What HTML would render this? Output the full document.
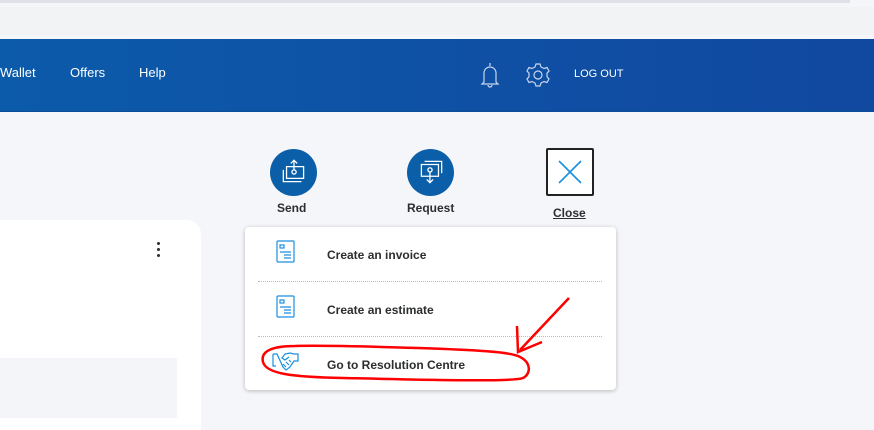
<!DOCTYPE html><html><head><style>
body{margin:0;width:874px;height:416px;overflow:hidden;background:#f5f6fa;font-family:"Liberation Sans",sans-serif;position:relative}
.a{position:absolute}
.t{font-weight:bold;font-size:12px;color:#2c2e2f}
</style></head><body>
<div class="a" style="left:0;top:0;width:850px;height:3px;background:#dfe1e6"></div>
<div class="a" style="left:0;top:7px;width:874px;height:28px;background:#f2f3f5"></div>
<div class="a" style="left:0;top:39px;width:874px;height:72px;background:linear-gradient(90deg,#0c5aaa,#1148a0)"></div>
<div class="a" style="left:0;top:111px;width:874px;height:1px;background:#0a4e9c"></div>
<div class="a" style="left:0;top:65px;color:#fff;font-size:13px">Wallet</div>
<div class="a" style="left:70px;top:65px;color:#fff;font-size:13px">Offers</div>
<div class="a" style="left:139px;top:65px;color:#fff;font-size:13px">Help</div>
<svg class="a" style="left:478px;top:61px" width="24" height="28" viewBox="0 0 24 28" fill="none" stroke="#c9d6ee" stroke-width="1.2"><path d="M12 2v3M6 21V12a6 6 0 0 1 12 0v9l2 2H4z M10 24a2 2 0 0 0 4 0"/></svg>
<svg class="a" style="left:524px;top:61px" width="28" height="28" viewBox="0 0 28 28" fill="none" stroke="#c9d6ee" stroke-width="1.2"><path d="M12 3h4l1 3 3 1.5 3-1 2 3.5-2 2.2v3.6l2 2.2-2 3.5-3-1L17 22l-1 3h-4l-1-3-3-1.5-3 1-2-3.5 2-2.2v-3.6l-2-2.2 2-3.5 3 1L11 6z"/><circle cx="14" cy="14" r="4"/></svg>
<div class="a" style="left:574px;top:68px;color:#fff;font-size:11px">LOG OUT</div>
<div class="a" style="left:-20px;top:220px;width:221px;height:210px;background:#fff;border-radius:0 14px 0 0"></div>
<div class="a" style="left:0;top:358px;width:177px;height:60px;background:#f4f5f8"></div>
<div class="a" style="left:157px;top:242px;width:3px;height:3px;background:#2c2e2f;box-shadow:0 6px #2c2e2f,0 12px #2c2e2f;border-radius:50%"></div>
<div class="a" style="left:270px;top:149px;width:47px;height:47px;border-radius:50%;background:#0b5fa8"></div>
<svg class="a" style="left:278px;top:156px" width="32" height="32" viewBox="0 0 30 30" fill="none" stroke="#fff" stroke-width="1.2"><path d="M8 10h16v11H8zM5 13v11h17M15 13a2 2 0 1 0 0.1 0M15 13V4M12 7l3-3 3 3"/></svg>
<div class="a t" style="left:277px;top:201px">Send</div>
<div class="a" style="left:407px;top:149px;width:47px;height:47px;border-radius:50%;background:#0b5fa8"></div>
<svg class="a" style="left:415px;top:156px" width="32" height="32" viewBox="0 0 30 30" fill="none" stroke="#fff" stroke-width="1.2"><path d="M9 5h16v11M6 8h16v11H6zM14 11a2 2 0 1 0 0.1 0M14 15v10M11 22l3 3 3-3"/></svg>
<div class="a t" style="left:407px;top:201px">Request</div>
<div class="a" style="left:546px;top:148px;width:44px;height:44px;border:2px solid #222;border-radius:2px;background:#fff"></div>
<svg class="a" style="left:558px;top:160px" width="24" height="24" stroke="#1a8fe0" stroke-width="1.6"><path d="M1 1l22 22M23 1L1 23"/></svg>
<div class="a t" style="left:553px;top:206px;text-decoration:underline">Close</div>
<div class="a" style="left:245px;top:227px;width:371px;height:163px;background:#fff;border-radius:4px;box-shadow:0 1px 4px rgba(0,0,0,.25)"></div>
<div class="a" style="left:258px;top:281px;width:344px;border-top:1px dotted #bbb"></div>
<div class="a" style="left:258px;top:336px;width:344px;border-top:1px dotted #bbb"></div>
<svg class="a" style="left:276px;top:240px" width="20" height="24" fill="none" stroke="#1a8fe0" stroke-width="1.2"><rect x="1" y="1" width="17" height="21" rx="1"/><rect x="4" y="5" width="4" height="3"/><path d="M4 12h11M8 15h7M8 18h7"/></svg>
<svg class="a" style="left:276px;top:295px" width="20" height="24" fill="none" stroke="#1a8fe0" stroke-width="1.2"><rect x="1" y="1" width="17" height="21" rx="1"/><rect x="4" y="5" width="4" height="3"/><path d="M4 12h11M8 15h7M8 18h7"/></svg>
<svg class="a" style="left:271px;top:351px" width="28" height="22" fill="none" stroke="#1a8fe0" stroke-width="1.2"><path d="M2 3h4l6 13 3 3 4-3 4-6h4V3h-4l-4-1-5 1-3 4 3 2 4-3M2 3v12h3M15 16l-3-3M18 14l-3-3M20 11l-2-2"/></svg>
<div class="a t" style="left:327px;top:248px">Create an invoice</div>
<div class="a t" style="left:327px;top:303px">Create an estimate</div>
<div class="a t" style="left:327px;top:358px">Go to Resolution Centre</div>
<svg class="a" style="left:255px;top:290px" width="320" height="95" fill="none" stroke="#f00" stroke-width="2.5"><path d="M40 56C20 56 5 60 8 72c3 12 30 15 80 16 90 2 170 4 180 0 8-4 9-16-5-22-10-4-40-6-100-8-40-1-90-3-123-2"/><path d="M314 8L265 60M262 36l1 26 24-10"/></svg>
</body></html>
